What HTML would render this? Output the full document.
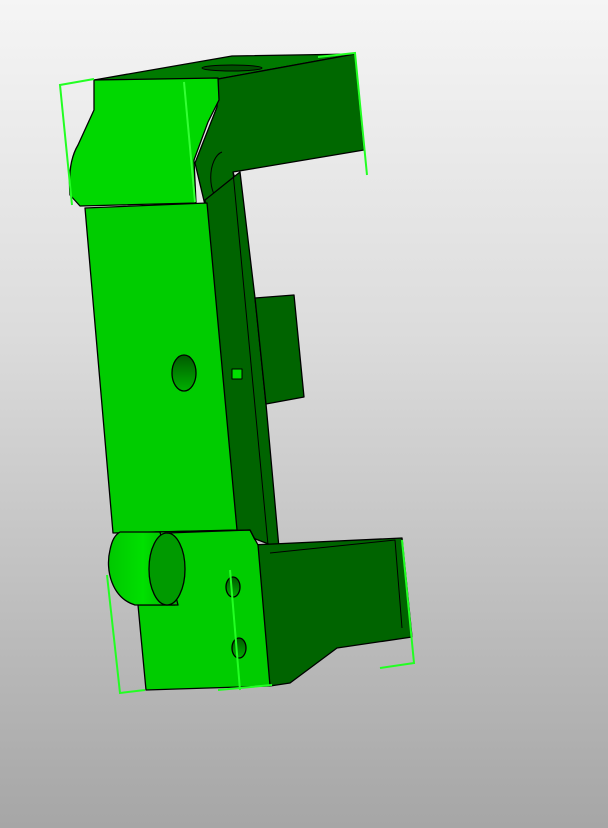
<!DOCTYPE html>
<html><head><style>
html,body{margin:0;padding:0;width:608px;height:828px;overflow:hidden;background:linear-gradient(#f5f5f5,#dcdcdc 40%,#a6a6a6);}
svg{display:block}
</style></head><body>
<svg width="608" height="828" viewBox="0 0 608 828">
<defs>
<linearGradient id="cyl" x1="0" y1="0" x2="1" y2="0"><stop offset="0" stop-color="#00c800"/><stop offset="0.5" stop-color="#00e000"/><stop offset="1" stop-color="#00b000"/></linearGradient>
<linearGradient id="hole" x1="0" y1="0" x2="0" y2="1"><stop offset="0" stop-color="#005a00"/><stop offset="1" stop-color="#00b000"/></linearGradient>
</defs>
<g stroke="#000" stroke-width="1.3" stroke-linejoin="round">
<!-- top face -->
<polygon points="94,80 232,56 355,54 218,79" fill="#007a00"/>
<ellipse cx="232" cy="68" rx="30" ry="3" fill="#005000" stroke-width="1"/>
<!-- right dark top block -->
<polygon points="218,79 355,54 364,150 233,172 240,195 205,205 195,163 217,107" fill="#006800"/>
<path d="M222,152 A14,26 0 0 0 222,203" fill="none" stroke-width="1"/>
<!-- dark column strip -->
<polygon points="205,200 240,172 255,298 266,404 279,548 237,532" fill="#006400"/>
<line x1="233" y1="172" x2="268" y2="545" stroke-width="1"/>
<!-- tab -->
<polygon points="255,298 294,295 304,397 266,404" fill="#006400"/>
<!-- column front -->
<polygon points="85,208 207,203 237,530 113,533" fill="#00cc00"/>
<ellipse cx="184" cy="373" rx="12" ry="18" fill="url(#hole)"/>
<rect x="232" y="369" width="10" height="10" fill="#00e000" stroke-width="1"/>
<!-- top front bright -->
<path d="M94,80 L218,78 L219,100 L208,122 L194,160 L196,203 L80,206 L70,195 C68,170 72,155 78,145 L94,110 Z" fill="#00d800"/>
<line x1="184" y1="82" x2="195" y2="202" stroke="#33ff33" stroke-width="2"/>
<!-- bottom dark block -->
<polygon points="252,545 402,538 412,637 337,648 290,683 270,686" fill="#006400"/>
<polyline points="270,553 395,540 402,628" fill="none" stroke-width="1"/>
<!-- bottom bright block -->
<polygon points="155,532 250,530 258,545 270,686 146,690 138,605 175,605" fill="#00cc00"/>
<!-- cylinder -->
<path d="M120,532 L160,532 L178,605 L135,605 C112,598 105,570 110,550 C112,540 115,535 120,532 Z" fill="url(#cyl)"/>
<ellipse cx="167" cy="569" rx="18" ry="36" fill="#009a00"/>
<path d="M167,533 L250,530 L255,540" fill="none"/>
<ellipse cx="233" cy="587" rx="7" ry="10" fill="url(#hole)"/>
<ellipse cx="239" cy="648" rx="7" ry="10" fill="url(#hole)"/>
</g>
<!-- wireframe bright lines -->
<g stroke="#22ff22" stroke-width="2" fill="none">
<polyline points="94,79 60,85 72,205"/>
<polyline points="318,57 355,53 367,175"/>
<polyline points="107,575 120,693 145,690"/>
<polyline points="230,570 240,690"/>
<polyline points="218,690 272,685"/>
<polyline points="402,540 414,663 380,668"/>
</g>
</svg>
</body></html>
